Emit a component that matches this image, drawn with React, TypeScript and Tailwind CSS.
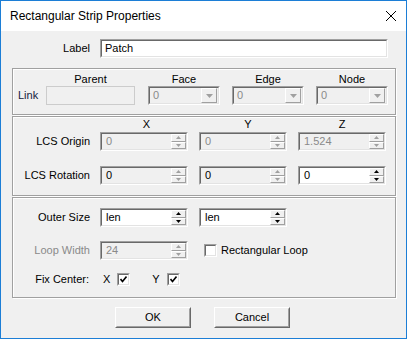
import React from 'react';

function Sunken({ className, children }: { className: string; children?: React.ReactNode }) {
  return (
    <div className={`h-[19px] border border-t-[#a0a0a0] border-l-[#a0a0a0] border-b-white border-r-white ${className}`}>
      <div className="h-full border border-t-[#696969] border-l-[#696969] border-b-[#e3e3e3] border-r-[#e3e3e3] flex items-stretch">
        {children}
      </div>
    </div>
  );
}

function Arrow({ up, color }: { up?: boolean; color: string }) {
  return (
    <svg width="5" height="3" viewBox="0 0 5 3">
      <polygon points={up ? '2.5,0 5,3 0,3' : '0,0 5,0 2.5,3'} fill={color} />
    </svg>
  );
}

function SpinField({ value, bg, text }: { value: string; bg: string; text: string }) {
  const arrow = bg === 'white' ? '#000' : '#a0a0a0';
  return (
    <Sunken className={`w-[88px] ${bg === 'white' ? 'bg-white' : 'bg-[#f0f0f0]'}`}>
      <span className={`flex-1 pl-[4px] leading-[15px] ${text}`}>{value}</span>
      <div className="w-[15px] flex flex-col">
        <div className="flex-1 flex items-center justify-center bg-[#f0f0f0] border border-t-white border-l-white border-b-[#a0a0a0] border-r-[#a0a0a0]">
          <Arrow up color={arrow} />
        </div>
        <div className="flex-1 flex items-center justify-center bg-[#f0f0f0] border border-t-white border-l-white border-b-[#a0a0a0] border-r-[#a0a0a0]">
          <Arrow color={arrow} />
        </div>
      </div>
    </Sunken>
  );
}

function Combo() {
  return (
    <Sunken className="w-[72px] bg-[#f0f0f0]">
      <span className="flex-1 pl-[3px] leading-[15px] text-[#8a8a8a]">0</span>
      <div className="w-[16px] mr-[1px] flex items-center justify-center bg-[#f0f0f0] border border-t-white border-l-white border-b-[#a0a0a0] border-r-[#a0a0a0]">
        <svg width="7" height="4" viewBox="0 0 7 4">
          <polygon points="0,0 7,0 3.5,4" fill="#a0a0a0" />
        </svg>
      </div>
    </Sunken>
  );
}

function Check({ checked }: { checked?: boolean }) {
  return (
    <div className="w-[13px] h-[13px] bg-white border border-t-[#a0a0a0] border-l-[#a0a0a0] border-b-white border-r-white">
      <div className="w-full h-full border border-t-[#696969] border-l-[#696969] border-b-[#e3e3e3] border-r-[#e3e3e3] flex items-center justify-center">
        {checked && (
          <svg width="7" height="7" viewBox="0 0 7 7">
            <polyline points="0.5,3 2.5,5.5 6.5,0.5" fill="none" stroke="#000" strokeWidth="1.6" />
          </svg>
        )}
      </div>
    </div>
  );
}

function Button({ label }: { label: string }) {
  return (
    <div className="w-[76px] h-[21px] border border-t-white border-l-white border-b-[#696969] border-r-[#696969] bg-[#f0f0f0]">
      <div className="w-full h-full border border-t-[#f0f0f0] border-l-[#f0f0f0] border-b-[#a0a0a0] border-r-[#a0a0a0] flex items-center justify-center">
        {label}
      </div>
    </div>
  );
}

const group = 'ml-[11px] w-[384px] border border-[#a0a0a0] shadow-[inset_1px_1px_0_#fff,1px_1px_0_#fff]';

export default function App() {
  return (
    <div className="w-[407px] h-[339px] border border-[#1c7ed6] bg-[#f0f0f0] flex flex-col font-['Liberation_Sans',Arial,sans-serif] text-[11px] text-black">
      <div className="h-[30px] bg-white flex items-center justify-between pl-[9px] pr-[10px] text-[12px]">
        <span>Rectangular Strip Properties</span>
        <svg width="10" height="10" viewBox="0 0 10 10">
          <path d="M0 0 L10 10 M10 0 L0 10" stroke="#000" strokeWidth="1" />
        </svg>
      </div>

      <div className="flex flex-col">
        <div className="mt-[8px] flex items-center">
          <span className="w-[89px] text-right">Label</span>
          <Sunken className="ml-[10px] w-[288px] bg-white">
            <span className="pl-[3px] leading-[15px]">Patch</span>
          </Sunken>
        </div>

        <div className={`${group} mt-[10px] h-[47px]`}>
          <div className="mt-[3px] h-[14px] flex leading-[14px]">
            <span className="w-[33px]" />
            <span className="w-[89px] text-center">Parent</span>
            <div className="ml-[13px] flex gap-[12px]">
              <span className="w-[72px] text-center">Face</span>
              <span className="w-[72px] text-center">Edge</span>
              <span className="w-[72px] text-center">Node</span>
            </div>
          </div>
          <div className="flex items-center">
            <span className="w-[33px] pl-[5px] text-[#14213d]">Link</span>
            <div className="w-[89px] h-[19px] border border-[#cccccc]" />
            <div className="ml-[13px] flex gap-[12px]">
              <Combo />
              <Combo />
              <Combo />
            </div>
          </div>
        </div>

        <div className={`${group} mt-[1px] h-[80px]`}>
          <div className="h-[15px] flex leading-[15px]">
            <span className="w-[87px]" />
            <div className="flex gap-[11px]">
              <span className="w-[88px] text-center pl-[5px]">X</span>
              <span className="w-[88px] text-center pl-[10px]">Y</span>
              <span className="w-[88px] text-center">Z</span>
            </div>
          </div>
          <div className="flex items-center">
            <span className="w-[77px] text-right">LCS Origin</span>
            <div className="ml-[10px] flex gap-[11px]">
              <SpinField value="0" bg="gray" text="text-[#8a8a8a]" />
              <SpinField value="0" bg="gray" text="text-[#8a8a8a]" />
              <SpinField value="1.524" bg="gray" text="text-[#8a8a8a]" />
            </div>
          </div>
          <div className="mt-[15px] flex items-center">
            <span className="w-[77px] text-right">LCS Rotation</span>
            <div className="ml-[10px] flex gap-[11px]">
              <SpinField value="0" bg="gray" text="text-black" />
              <SpinField value="0" bg="gray" text="text-black" />
              <SpinField value="0" bg="white" text="text-black" />
            </div>
          </div>
        </div>

        <div className={`${group} mt-[1px] h-[101px]`}>
          <div className="mt-[10px] flex items-center">
            <span className="w-[77px] text-right">Outer Size</span>
            <div className="ml-[10px] flex gap-[11px]">
              <SpinField value="len" bg="white" text="text-black" />
              <SpinField value="len" bg="white" text="text-black" />
            </div>
          </div>
          <div className="mt-[14px] flex items-center">
            <span className="w-[77px] text-right text-[#8a8a8a]">Loop Width</span>
            <div className="ml-[10px]">
              <SpinField value="24" bg="gray" text="text-[#8a8a8a]" />
            </div>
            <div className="ml-[16px]">
              <Check />
            </div>
            <span className="ml-[4px]">Rectangular Loop</span>
          </div>
          <div className="mt-[13px] h-[13px] flex items-center">
            <span className="w-[76px] text-right">Fix Center:</span>
            <span className="ml-[14px]">X</span>
            <div className="ml-[7px]">
              <Check checked />
            </div>
            <span className="ml-[22px]">Y</span>
            <div className="ml-[7px]">
              <Check checked />
            </div>
          </div>
        </div>

        <div className="mt-[9px] ml-[114px] flex gap-[23px]">
          <Button label="OK" />
          <Button label="Cancel" />
        </div>
      </div>
    </div>
  );
}
